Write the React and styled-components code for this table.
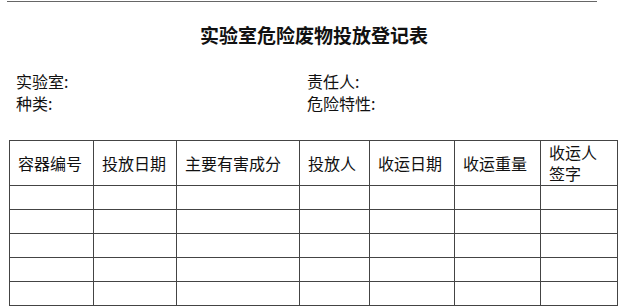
import React from 'react';
import styled, { createGlobalStyle } from 'styled-components';

const GlobalStyle = createGlobalStyle`
    html, body {
        margin: 0;
        padding: 0;
        background: #fff;
    }
    body {
        font-family: "Noto Sans CJK SC", "Liberation Sans", sans-serif;
        color: #111;
    }
`;

const App = () => {
    // 数据
    const info = [
        ['实验室:', '责任人:'],
        ['种类:', '危险特性:'],
    ];
    const columns = [
        { title: '容器编号', width: 84 },
        { title: '投放日期', width: 83 },
        { title: '主要有害成分', width: 123 },
        { title: '投放人', width: 70 },
        { title: '收运日期', width: 85 },
        { title: '收运重量', width: 86 },
        { title: '收运人签字', width: 77 },
    ];
    const rows = 5;

    return (
        <Page>
            <GlobalStyle />
            <TopRule />
            <Title>实验室危险废物投放登记表</Title>
            <InfoGrid>
                {info.flat().map((label, i) => (
                    <InfoLabel key={i}>{label}</InfoLabel>
                ))}
            </InfoGrid>
            <Sheet>
                <colgroup>
                    {columns.map((col, i) => (
                        <col key={i} style={{ width: col.width }} />
                    ))}
                </colgroup>
                <thead>
                    <tr>
                        {columns.map((col, i) => (
                            <HeadCell key={i}>{col.title}</HeadCell>
                        ))}
                    </tr>
                </thead>
                <tbody>
                    {Array.from({ length: rows }).map((_, r) => (
                        <tr key={r}>
                            {columns.map((_, c) => (
                                <BodyCell key={c} />
                            ))}
                        </tr>
                    ))}
                </tbody>
            </Sheet>
        </Page>
    );
};

export default App;

// 样式
const Page = styled.div`
    width: 640px;
    height: 306px;
    overflow: hidden;
    padding-top: 1px;
    box-sizing: border-box;
`;

const TopRule = styled.div`
    margin-left: 7px;
    width: 590px;
    height: 1px;
    background: #666;
`;

const Title = styled.h1`
    margin: 20px 0 0;
    padding-right: 12px;
    font-size: 19px;
    line-height: 26px;
    font-weight: bold;
    text-align: center;
    color: #111;
`;

const InfoGrid = styled.div`
    display: grid;
    grid-template-columns: 291px 1fr;
    grid-auto-rows: 22px;
    margin-top: 22px;
    padding-left: 16px;
`;

const InfoLabel = styled.div`
    font-size: 16px;
    line-height: 22px;
    color: #111;
`;

const Sheet = styled.table`
    margin: 26px 0 0 9px;
    width: 608px;
    table-layout: fixed;
    border-collapse: collapse;
`;

const HeadCell = styled.th`
    height: 45px;
    padding: 0 7px 0 8px;
    border: 1px solid #444;
    font-size: 16px;
    line-height: 21px;
    font-weight: normal;
    text-align: left;
    vertical-align: middle;
    color: #111;
    box-sizing: border-box;
`;

const BodyCell = styled.td`
    height: 24px;
    padding: 0;
    border: 1px solid #444;
    box-sizing: border-box;
`;
